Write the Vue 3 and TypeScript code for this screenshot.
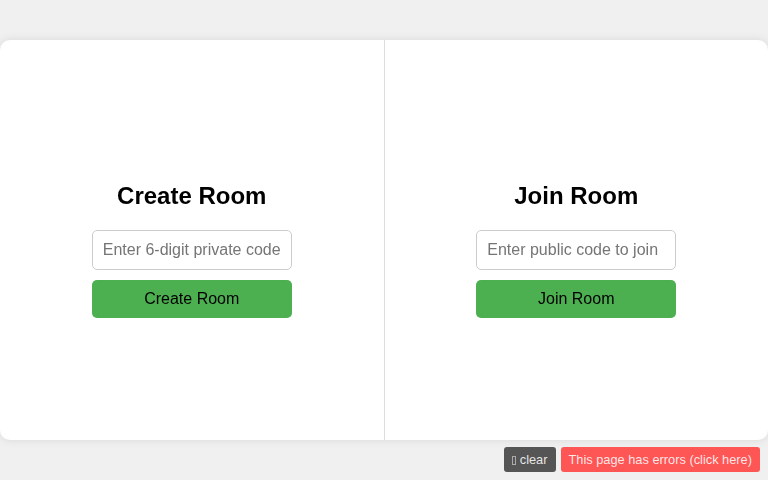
<script setup lang="ts">
interface Panel { title: string; placeholder: string; action: string }
const panels: Panel[] = [
  { title: 'Create Room', placeholder: 'Enter 6-digit private code', action: 'Create Room' },
  { title: 'Join Room', placeholder: 'Enter public code to join', action: 'Join Room' },
]
</script>

<template>
  <div class="page">
    <main class="card">
      <section v-for="p in panels" :key="p.title" class="panel">
        <h2 class="title">{{ p.title }}</h2>
        <input class="field" type="text" :placeholder="p.placeholder" />
        <button class="submit" type="button">{{ p.action }}</button>
      </section>
    </main>
    <div class="overlay">
      <button class="tag clear" type="button"><span class="missing-glyph"></span> clear</button>
      <button class="tag errors" type="button">This page has errors (click here)</button>
    </div>
  </div>
</template>

<style>
html, body { margin: 0; background: #f0f0f0; }
</style>

<style scoped>
.page {
  height: 480px;
  display: flex;
  align-items: center;
  font-family: "Liberation Sans", Arial, sans-serif;
  background: #f0f0f0;
}
.card {
  width: 100%;
  height: 400px;
  display: flex;
  background: #fff;
  border-radius: 10px;
  box-shadow: 0 0 10px rgba(0, 0, 0, 0.1);
  overflow: hidden;
  will-change: transform;
}
.panel {
  flex: 1;
  min-width: 0;
  display: flex;
  flex-direction: column;
  align-items: center;
  justify-content: center;
}
.panel + .panel { border-left: 1px solid #ddd; }
.title {
  margin: 20px 0;
  font-size: 24px;
  font-weight: 700;
  color: #000;
}
.field {
  box-sizing: border-box;
  width: 200px;
  height: 40px;
  padding: 10px;
  margin: 0 0 10px;
  font: 16px "Liberation Sans", Arial, sans-serif;
  background: #fff;
  border: 1px solid #ccc;
  border-radius: 5px;
  outline: none;
}
.submit {
  box-sizing: border-box;
  width: 200px;
  height: 38px;
  padding: 10px;
  font: 16px "Liberation Sans", Arial, sans-serif;
  color: #000;
  background: #4caf50;
  border: none;
  border-radius: 5px;
}
.overlay {
  position: fixed;
  right: 8px;
  bottom: 8px;
  display: flex;
  gap: 5px;
}
.tag {
  height: 25px;
  padding: 0 8px;
  font: 12.8px "Liberation Sans", Arial, sans-serif;
  color: rgba(255, 255, 255, 0.88);
  border: none;
  border-radius: 3px;
  opacity: 0.9;
}
.clear { background: #444; }
.errors { background: #f44; }
.missing-glyph {
  display: inline-block;
  box-sizing: border-box;
  width: 4px;
  height: 9px;
  vertical-align: -1px;
  border: 1px solid rgba(255, 255, 255, 0.5);
}
</style>
